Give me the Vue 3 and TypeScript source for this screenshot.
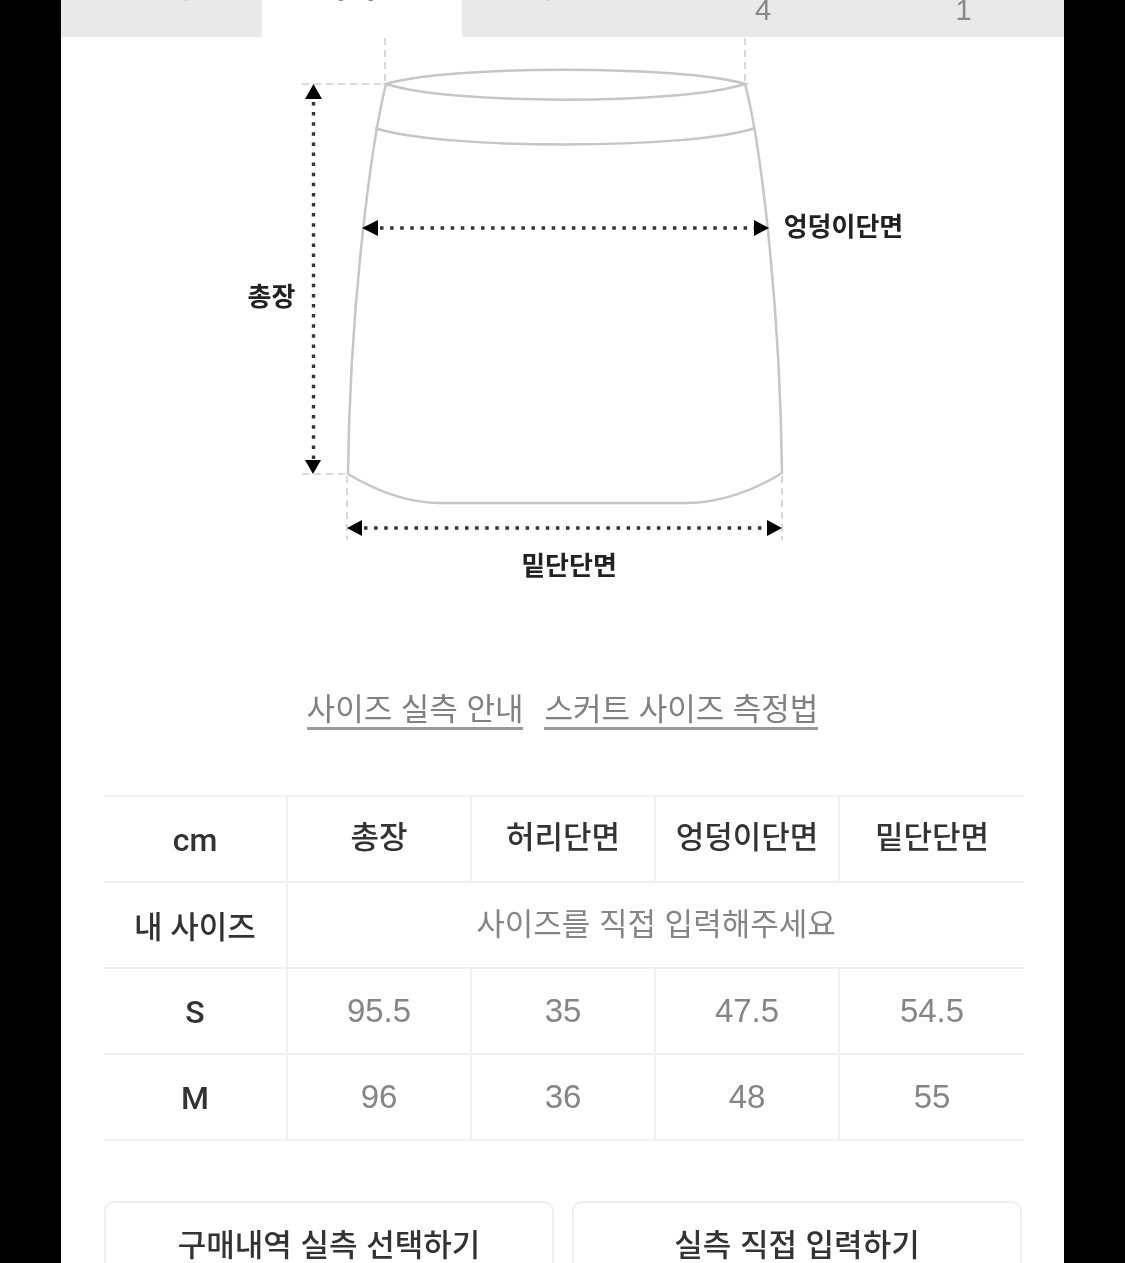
<script setup lang="ts">
interface Tab { label: string; count?: number; active?: boolean }
const tabs: Tab[] = [
  { label: '상세' },
  { label: '사이즈', active: true },
  { label: '추천' },
  { label: '후기', count: 4 },
  { label: '문의', count: 1 },
]
const headers = ['총장', '허리단면', '엉덩이단면', '밑단단면']
const rows = [
  { size: 'S', values: ['95.5', '35', '47.5', '54.5'] },
  { size: 'M', values: ['96', '36', '48', '55'] },
]
</script>

<template>
  <div class="page">
    <nav class="tabs">
      <div v-for="t in tabs" :key="t.label" class="tab" :class="{ active: t.active, counted: t.count !== undefined }">
        <span>{{ t.label }}</span>
        <span v-if="t.count !== undefined" class="count">{{ t.count }}</span>
      </div>
    </nav>

    <svg class="diagram" viewBox="61 37 1003 600" width="1003" height="600">
      <g fill="none" stroke="#c6c6c6" stroke-width="2.5">
        <path d="M386 84 C 450 65, 680 65, 745 84 C 680 105, 450 105, 386 84 Z" />
        <path d="M375 128 C 440 150, 690 150, 755 128" />
        <path d="M386 84 C 372 140, 350 300, 348 474 C 375 490, 405 503, 440 503 L 687 503 C 720 503, 755 490, 782 473 C 780 300, 760 140, 745 84" />
      </g>
      <g fill="none" stroke="#cfcfcf" stroke-width="1.6" stroke-dasharray="7 5">
        <path d="M385 38 V84" />
        <path d="M745 38 V84" />
        <path d="M302 84 H386" />
        <path d="M302 474 H348" />
        <path d="M347 476 V540" />
        <path d="M782 476 V540" />
      </g>
      <g fill="none" stroke="#333" stroke-width="3.4" stroke-dasharray="3.5 6.6">
        <path d="M313.5 102 V460" />
        <path d="M380 228 H754" />
        <path d="M364 528 H767" />
      </g>
      <g fill="#000">
        <path d="M313.5 84 L322 99 H305 Z" />
        <path d="M313 474 L305 460 H321 Z" />
        <path d="M362 228 L378 220 V236 Z" />
        <path d="M769 228 L754 220 V236 Z" />
        <path d="M347 528 L362 520 V536 Z" />
        <path d="M782 528 L767 520 V536 Z" />
      </g>
      <g class="label">
        <text x="271.5" y="306" text-anchor="middle">총장</text>
        <text x="843.5" y="236" text-anchor="middle">엉덩이단면</text>
        <text x="569" y="575" text-anchor="middle">밑단단면</text>
      </g>
    </svg>

    <div class="links">
      <a class="link">사이즈 실측 안내</a>
      <a class="link">스커트 사이즈 측정법</a>
    </div>

    <div class="sheet">
      <div class="cell lead">cm</div>
      <div v-for="(h, i) in headers" :key="h" class="cell head" :class="{ end: i === 3 }">{{ h }}</div>

      <div class="cell lead kr">내 사이즈</div>
      <div class="cell wide end">사이즈를 직접 입력해주세요</div>

      <template v-for="r in rows" :key="r.size">
        <div class="cell lead">{{ r.size }}</div>
        <div v-for="(v, i) in r.values" :key="i" class="cell num" :class="{ end: i === 3 }">{{ v }}</div>
      </template>
    </div>

    <div class="actions">
      <button class="action">구매내역 실측 선택하기</button>
      <button class="action">실측 직접 입력하기</button>
    </div>
  </div>
</template>

<style>
html, body { background: #000; margin: 0; }
</style>

<style scoped>
.page {
  width: 1003px;
  height: 1263px;
  margin: 0 auto;
  overflow: hidden;
  background: #fff;
  font-family: "Liberation Sans", "Noto Sans CJK KR", sans-serif;
  font-size: 31px;
  filter: blur(0.6px);
}
.tabs {
  display: grid;
  grid-template-columns: 201px 200px 201px 200px 201px;
  height: 37px;
  overflow: hidden;
}
.tab {
  height: 37px;
  background: #e9e9e9;
  color: #888;
  display: flex;
  flex-direction: column;
  justify-content: flex-end;
  align-items: center;
  line-height: 34px;
  padding-bottom: 33px;
  box-sizing: border-box;
}
.tab.counted { padding-bottom: 12px; }
.tab.active { background: #fff; color: #111; font-weight: 700; }
.count { font-size: 29px; line-height: 30px; }
.diagram { display: block; }
.label text {
  font-family: "Noto Sans CJK KR", sans-serif;
  font-size: 26px;
  font-weight: 700;
  fill: #222;
}
.links {
  display: flex;
  justify-content: center;
  gap: 21px;
  margin-top: 55px;
}
.link {
  line-height: 35px;
  color: #808080;
  border-bottom: 3px solid #9a9a9a;
}
.sheet {
  display: grid;
  grid-template-columns: repeat(5, 184px);
  grid-auto-rows: 86px;
  margin: 65px 0 0 43px;
  width: 920px;
  border-top: 2px solid #f1f1f1;
}
.cell {
  display: flex;
  align-items: center;
  justify-content: center;
  border-right: 2px solid #f1f1f1;
  border-bottom: 2px solid #f1f1f1;
  box-sizing: border-box;
}
.cell.end { border-right: 0; }
.lead {
  color: #333;
  font-family: Roboto, "Noto Sans CJK KR", sans-serif;
  font-size: 32px;
  font-weight: 500;
  padding-top: 2px;
}
.kr { font-size: 31px; padding-top: 0; padding-bottom: 2px; }
.head { color: #333; font-weight: 500; padding-bottom: 10px; }
.wide { grid-column: span 4; color: #858585; padding-bottom: 8px; }
.num { color: #858585; font-size: 33px; }
.actions {
  display: flex;
  gap: 18px;
  margin: 60px 0 0 43px;
}
.action {
  width: 450px;
  height: 86px;
  padding: 0 0 4px;
  border: 2px solid #efefef;
  border-radius: 10px;
  background: #fff;
  color: #333;
  font: 500 31px "Liberation Sans", "Noto Sans CJK KR", sans-serif;
}
</style>
